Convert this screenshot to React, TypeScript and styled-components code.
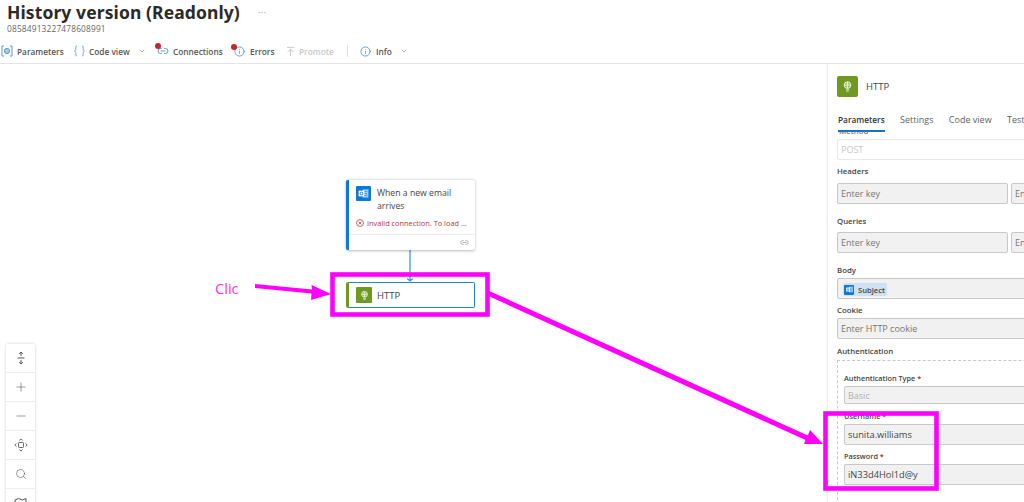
import React from "react";
import styled, { createGlobalStyle } from "styled-components";
import { ChevronDown, Link2, Info, ArrowUpToLine, Plus, Minus, Search } from "lucide-react";

const Global = createGlobalStyle`
  html, body { margin: 0; padding: 0; background: #fff; }
  body { font-family: "Open Sans", "Noto Sans", "Liberation Sans", sans-serif; color: #323130; }
  * { box-sizing: border-box; }
`;

const Page = styled.div`
  position: relative;
  width: 1024px;
  height: 502px;
  overflow: hidden;
  background: #fff;
  display: flex;
  flex-direction: column;
`;

const Header = styled.header`
  height: 64px;
  flex: none;
  border-bottom: 1px solid #e4e4e4;
  padding-left: 7px;
  display: flex;
  flex-direction: column;
`;

const TitleRow = styled.div`
  display: flex;
  align-items: center;
  height: 23px;
  margin-top: 1px;
  gap: 18px;
`;

const Title = styled.h1`
  margin: 0;
  font-family: "Noto Sans", sans-serif;
  font-size: 17.5px;
  font-weight: 700;
  letter-spacing: 0.1px;
  color: #2b2a29;
  line-height: 23px;
`;

const Dots = styled.span`
  font-size: 9px;
  color: #8a8886;
  letter-spacing: 0.5px;
`;

const RunId = styled.div`
  font-size: 8.4px;
  color: #666;
  line-height: 12px;
  letter-spacing: 0.15px;
  margin-top: -1px;
`;

const Toolbar = styled.div`
  display: flex;
  align-items: center;
  margin-top: 9px;
  height: 14px;
  margin-left: -6px;
`;

const ToolItem = styled.div<{ $w: number; $off?: boolean }>`
  position: relative;
  width: ${(p) => p.$w}px;
  flex: none;
  display: flex;
  align-items: center;
  font-size: 8.3px;
  font-weight: 600;
  white-space: nowrap;
  color: ${(p) => (p.$off ? "#c8c8c8" : "#555")};
`;

const IconSlot = styled.span<{ $w: number; $c?: string }>`
  width: ${(p) => p.$w}px;
  flex: none;
  display: flex;
  align-items: center;
  color: ${(p) => p.$c ?? "#5b9bd5"};
  font-size: 11px;
  font-weight: 400;
`;

const RedDot = styled.span<{ $x: number }>`
  position: absolute;
  left: ${(p) => p.$x}px;
  top: -2px;
  width: 6px;
  height: 6px;
  border-radius: 50%;
  background: #c4262e;
`;

const Caret = styled(ChevronDown)`
  margin-left: 8px;
  color: #8a8886;
`;

const Divider = styled.span`
  width: 1px;
  height: 12px;
  background: #e1dfdd;
  margin: 0 12px 0 0;
  flex: none;
`;

const Body = styled.div`
  flex: 1;
  display: flex;
  min-height: 0;
`;

const Canvas = styled.main`
  position: relative;
  width: 827px;
  flex: none;
`;

const Edge = styled.svg`
  position: absolute;
  left: 405px;
  top: 186px;
`;

const Card = styled.div<{ $x: number; $y: number; $h: number; $accent: string }>`
  position: absolute;
  left: ${(p) => p.$x}px;
  top: ${(p) => p.$y}px;
  width: 129px;
  height: ${(p) => p.$h}px;
  background: #fff;
  border-left: 3px solid ${(p) => p.$accent};
  border-radius: 2px;
  box-shadow: 0 0.5px 3px rgba(0, 0, 0, 0.28);
`;

const CardHead = styled.div`
  display: flex;
  padding: 6px 6px 0 7px;
  gap: 6px;
  font-size: 8.7px;
  line-height: 13px;
  color: #444;
`;

const CardTitle = styled.span`
  margin-top: 1px;
`;

const AppIcon = styled.span<{ $s: number; $bg: string; $r?: number }>`
  width: ${(p) => p.$s}px;
  height: ${(p) => p.$s}px;
  background: ${(p) => p.$bg};
  border-radius: ${(p) => p.$r ?? 1}px;
  flex: none;
  display: inline-flex;
  align-items: center;
  justify-content: center;
`;

const ErrorLine = styled.div`
  display: flex;
  align-items: center;
  gap: 3px;
  padding: 0 0 0 7px;
  margin-top: 4px;
  height: 11px;
  font-size: 7.4px;
  color: #b8353b;
  white-space: nowrap;
`;

const CardFoot = styled.div`
  position: absolute;
  left: 0;
  right: 0;
  bottom: 0;
  height: 16px;
  border-top: 1px solid #ececec;
  display: flex;
  align-items: center;
  justify-content: flex-end;
  padding-right: 6px;
  color: #999;
`;

const HttpCard = styled(Card)`
  box-shadow: none;
  border-top: 1px solid #1f85d0;
  border-right: 1px solid #1f85d0;
  border-bottom: 1px solid #1f85d0;
  display: flex;
  align-items: center;
  padding-left: 7px;
  gap: 5px;
  font-size: 9.5px;
  color: #444;
`;

const Controls = styled.div`
  position: absolute;
  left: 6px;
  top: 280px;
  width: 29px;
  background: #fff;
  border-radius: 2px;
  box-shadow: 0 0 3px rgba(0, 0, 0, 0.2);
  display: flex;
  flex-direction: column;
`;

const ControlBtn = styled.div`
  height: 29px;
  flex: none;
  display: flex;
  align-items: center;
  justify-content: center;
  color: #555;
  border-bottom: 1px solid #ececec;
`;

const Panel = styled.aside`
  flex: 1;
  min-width: 0;
  border-left: 1px solid #eeeeee;
  box-shadow: -1px 0 2px rgba(0, 0, 0, 0.03);
  padding-left: 9px;
  overflow: hidden;
`;

const PanelHead = styled.div`
  display: flex;
  align-items: center;
  gap: 8px;
  margin-top: 11px;
  height: 22px;
  font-size: 9.5px;
  color: #444;
`;

const Tabs = styled.div`
  display: flex;
  margin-top: 15px;
  height: 20px;
  gap: 15.4px;
  padding-left: 1px;
  font-size: 9px;
  color: #555;
  white-space: nowrap;
`;

const Tab = styled.div<{ $on?: boolean }>`
  height: 20px;
  line-height: 16px;
  font-size: ${(p) => (p.$on ? "8.3px" : "9px")};
  font-weight: ${(p) => (p.$on ? 600 : 400)};
  color: ${(p) => (p.$on ? "#333" : "#606060")};
  border-bottom: ${(p) => (p.$on ? "2px solid #1a73c4" : "none")};
`;

const Form = styled.div`
  display: flex;
  flex-direction: column;
`;

const ScrolledLabel = styled.div`
  height: 3px;
  overflow: hidden;
  margin-bottom: 4px;
  padding-left: 2px;
  font-size: 7.8px;
  line-height: 8px;
  font-weight: 600;
  color: #777;
`;

const ScrolledText = styled.div`
  margin-top: -5px;
`;

const Label = styled.div<{ $top: number }>`
  margin-top: ${(p) => p.$top}px;
  font-size: 7.8px;
  line-height: 11px;
  font-weight: 600;
  color: #444;
  white-space: nowrap;
`;

const AuthLabel = styled(Label)`
  font-size: 7.3px;
`;

const Star = styled.span`
  color: #a4262c;
`;

const Pair = styled.div<{ $top: number }>`
  display: flex;
  gap: 3px;
  margin-top: ${(p) => p.$top}px;
`;

const Input = styled.div<{ $w?: number; $h?: number; $tone?: string; $light?: boolean; $top?: number; $big?: boolean }>`
  width: ${(p) => (p.$w ? `${p.$w}px` : "240px")};
  height: ${(p) => p.$h ?? 21}px;
  flex: none;
  margin-top: ${(p) => p.$top ?? 0}px;
  border: 1px solid ${(p) => (p.$light ? "#e8e8e8" : "#c8c8c8")};
  border-radius: 2px;
  background: ${(p) => (p.$light ? "#fff" : "#f1f1f1")};
  display: flex;
  align-items: center;
  padding-left: 3px;
  font-size: ${(p) => (p.$big ? "9.3px" : "9px")};
  color: ${(p) => p.$tone ?? "#777"};
  white-space: nowrap;
  overflow: hidden;
`;

const Token = styled.span`
  display: inline-flex;
  align-items: center;
  gap: 4px;
  height: 13px;
  padding: 0 2px 0 1px;
  margin: 2px 0 0 2px;
  background: #cfe2f3;
  border-radius: 2px;
  font-size: 7.6px;
  font-weight: 600;
  color: #444;
`;

const AuthBox = styled.div`
  margin-top: 3px;
  border-left: 1px dashed #c8c8c8;
  border-top: 1px dashed #c8c8c8;
  padding: 12px 0 0 6px;
  width: 240px;
  height: 140px;
`;

const Annotations = styled.svg`
  position: absolute;
  left: 0;
  top: 0;
  pointer-events: none;
`;

const ClicText = styled.span`
  position: absolute;
  left: 215px;
  top: 279px;
  font-size: 14.6px;
  line-height: 18px;
  color: #ff2df0;
`;

const BulbIcon = ({ s }: { s: number }) => (
  <svg width={s} height={s} viewBox="0 0 16 16" fill="none" stroke="#e8f0d8" strokeWidth="1">
    <circle cx="8" cy="6.5" r="3.6" fill="rgba(255,255,255,.35)" />
    <path d="M4.4 6.5h7.2M8 3v7M6.4 11.5h3.2M6.8 13h2.4" />
  </svg>
);

const MailIcon = ({ s }: { s: number }) => (
  <svg width={s} height={s} viewBox="0 0 16 16">
    <rect x="7" y="3" width="7" height="10" fill="#9fd0f5" />
    <path d="M8.5 5.5h4M8.5 8h4M8.5 10.5h4" stroke="#1f78c8" strokeWidth=".8" />
    <rect x="2" y="4.5" width="7" height="7" fill="#fff" />
    <circle cx="5.5" cy="8" r="1.7" fill="none" stroke="#0f6cbd" strokeWidth="1.1" />
  </svg>
);

const ParamIcon = () => (
  <svg width="12" height="12" viewBox="0 0 12 12" fill="none" stroke="#5b9bd5">
    <path d="M3 1H1v10h2M9 1h2v10H9" />
    <circle cx="6" cy="6" r="2.6" fill="#a9c8e8" />
  </svg>
);

const BraceIcon = () => (
  <svg width="11" height="12" viewBox="0 0 11 12" fill="none" stroke="#5b9bd5" strokeWidth=".9">
    <path d="M3 1C1.6 1 1.8 2 1.8 3.5S1.5 5.6.6 6c.9.4 1.2 1 1.2 2.5S1.6 11 3 11" />
    <path d="M8 1c1.4 0 1.2 1 1.2 2.5s.3 2.1 1.2 2.5c-.9.4-1.2 1-1.2 2.5S9.4 11 8 11" />
  </svg>
);

const FitIcon = () => (
  <svg width="12" height="14" viewBox="0 0 12 14" fill="none" stroke="#555" strokeWidth="1">
    <path d="M6 1v4M4.2 2.8L6 1l1.8 1.8M6 13V9M4.2 11.2L6 13l1.8-1.8M2.5 7h7" />
  </svg>
);

const CenterIcon = () => (
  <svg width="14" height="14" viewBox="0 0 14 14" fill="none" stroke="#555" strokeWidth=".9">
    <rect x="4.5" y="4.5" width="5" height="5" rx=".8" />
    <path d="M5.4 2.4L7 .9l1.6 1.5M5.4 11.6L7 13.1l1.6-1.5M2.4 5.4L.9 7l1.5 1.6M11.6 5.4L13.1 7l-1.5 1.6" />
  </svg>
);

const MapIcon = () => (
  <svg width="13" height="12" viewBox="0 0 13 12" fill="none" stroke="#555" strokeWidth="1">
    <path d="M1 3l3.5-1.5L8.5 3 12 1.5V9L8.5 10.5 4.5 9 1 10.5Z" />
  </svg>
);

export default function App() {
  return (
    <Page>
      <Global />
      <Header>
        <TitleRow>
          <Title>History version (Readonly)</Title>
          <Dots>···</Dots>
        </TitleRow>
        <RunId>08584913227478608991</RunId>
        <Toolbar>
          <ToolItem $w={73}>
            <IconSlot $w={16}><ParamIcon /></IconSlot>Parameters
          </ToolItem>
          <ToolItem $w={83}>
            <IconSlot $w={15}><BraceIcon /></IconSlot>Code view
            <Caret size={8} />
          </ToolItem>
          <ToolItem $w={77}>
            <RedDot $x={-2} />
            <IconSlot $w={16}><Link2 size={12} /></IconSlot>Connections
          </ToolItem>
          <ToolItem $w={51}>
            <RedDot $x={-3} />
            <IconSlot $w={16}><Info size={11} /></IconSlot>Errors
          </ToolItem>
          <ToolItem $w={62} $off>
            <IconSlot $w={14} $c="#c4c4c4"><ArrowUpToLine size={11} /></IconSlot>Promote
          </ToolItem>
          <Divider />
          <ToolItem $w={50}>
            <IconSlot $w={16}><Info size={11} /></IconSlot>Info
            <Caret size={8} />
          </ToolItem>
        </Toolbar>
      </Header>
      <Body>
        <Canvas>
          <Edge width="10" height="33" viewBox="0 0 10 33" fill="none" stroke="#2b8fe8" strokeWidth="1.2">
            <path d="M5 0v31M2.2 28.5L5 31l2.8-2.5" />
          </Edge>
          <Card $x={346} $y={116} $h={70} $accent="#0f78d4">
            <CardHead>
              <AppIcon $s={15} $bg="#0f78d4"><MailIcon s={13} /></AppIcon>
              <CardTitle>When a new email<br />arrives</CardTitle>
            </CardHead>
            <ErrorLine>
              <svg width="8" height="8" viewBox="0 0 8 8" fill="none" stroke="#c4474d" strokeWidth=".8">
                <circle cx="4" cy="4" r="3.5" />
                <path d="M2.6 2.6l2.8 2.8M5.4 2.6L2.6 5.4" />
              </svg>
              Invalid connection. To load ...
            </ErrorLine>
            <CardFoot><Link2 size={9} /></CardFoot>
          </Card>
          <HttpCard $x={346} $y={218} $h={26} $accent="#6f9a1f">
            <AppIcon $s={16} $bg="#6f9a1f"><BulbIcon s={13} /></AppIcon>
            HTTP
          </HttpCard>
          <Controls>
            <ControlBtn><FitIcon /></ControlBtn>
            <ControlBtn><Plus size={14} strokeWidth={1} /></ControlBtn>
            <ControlBtn><Minus size={14} strokeWidth={1} /></ControlBtn>
            <ControlBtn><CenterIcon /></ControlBtn>
            <ControlBtn><Search size={12} strokeWidth={1.2} /></ControlBtn>
            <ControlBtn><MapIcon /></ControlBtn>
          </Controls>
        </Canvas>
        <Panel>
          <PanelHead>
            <AppIcon $s={21} $bg="#6f9a1f" $r={2}><BulbIcon s={15} /></AppIcon>
            HTTP
          </PanelHead>
          <Tabs>
            <Tab $on>Parameters</Tab>
            <Tab>Settings</Tab>
            <Tab>Code view</Tab>
            <Tab>Testing</Tab>
          </Tabs>
          <Form>
            <ScrolledLabel><ScrolledText>Method</ScrolledText></ScrolledLabel>
            <Input $light $tone="#c4c4c4">POST</Input>
            <Label $top={6}>Headers</Label>
            <Pair $top={6}>
              <Input $w={171}>Enter key</Input>
              <Input $w={60}>Enter value</Input>
            </Pair>
            <Label $top={12}>Queries</Label>
            <Pair $top={5}>
              <Input $w={171}>Enter key</Input>
              <Input $w={60}>Enter value</Input>
            </Pair>
            <Label $top={12}>Body</Label>
            <Input $top={2}>
              <Token>
                <AppIcon $s={10} $bg="#0f78d4"><MailIcon s={9} /></AppIcon>
                Subject
              </Token>
            </Input>
            <Label $top={6}>Cookie</Label>
            <Input $top={2}>Enter HTTP cookie</Input>
            <Label $top={7}>Authentication</Label>
            <AuthBox>
              <AuthLabel $top={0}>Authentication Type <Star>*</Star></AuthLabel>
              <Input $top={2} $h={18} $w={220} $tone="#b0b0b0">Basic</Input>
              <AuthLabel $top={7}>Username <Star>*</Star></AuthLabel>
              <Input $top={2} $w={220} $big $tone="#444">sunita.williams</Input>
              <AuthLabel $top={6}>Password <Star>*</Star></AuthLabel>
              <Input $top={2} $w={220} $big $tone="#444">iN33d4Hol1d@y</Input>
            </AuthBox>
          </Form>
        </Panel>
      </Body>

      <ClicText>Clic</ClicText>
      <Annotations width="1024" height="502" viewBox="0 0 1024 502">
        <g fill="#ff00ff" stroke="none">
          <path d="M255 284L312 289.5L311.5 285L331 294L311 300L311.5 293.5L255 288Z" />
          <path d="M488 290.4L807.8 435.4L810 430L823 444L804 444L805.5 440L488 295.8Z" />
        </g>
        <g fill="none" stroke="#ff00ff" strokeWidth="4.6">
          <rect x="332.5" y="274.5" width="155" height="40" />
          <rect x="825.5" y="413.5" width="111" height="75" />
        </g>
      </Annotations>
    </Page>
  );
}
